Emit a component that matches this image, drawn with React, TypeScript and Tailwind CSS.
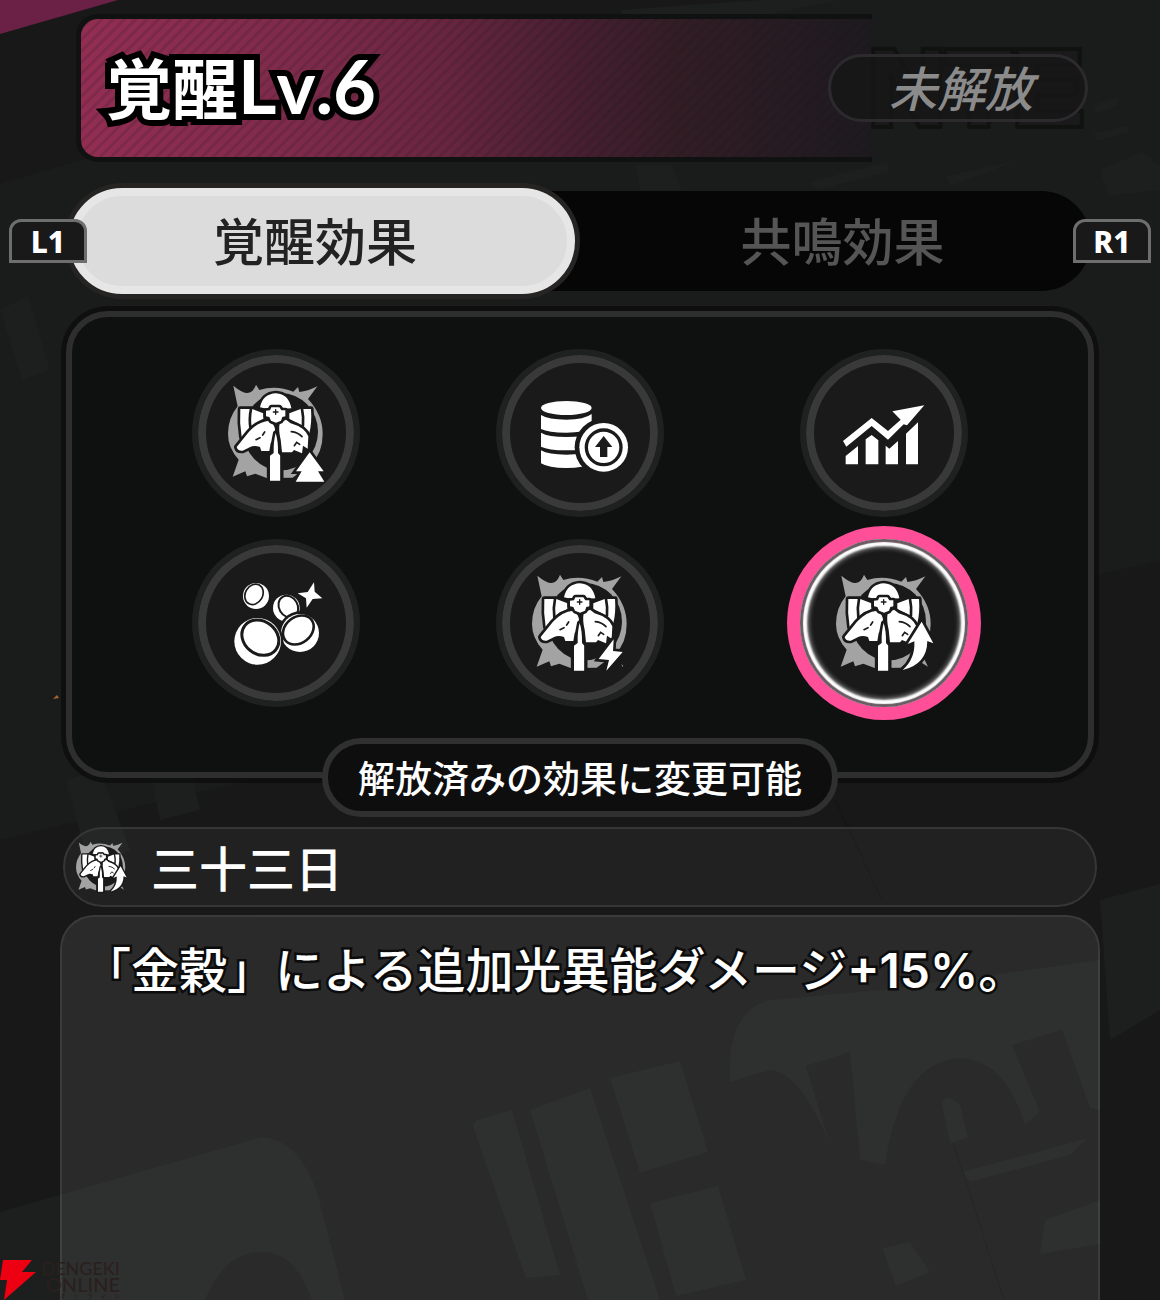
import clsx from "clsx";
import { useState, type ReactNode } from "react";

type Badge = "tree" | "bolt" | "arrow";

const BADGES: Record<Badge, ReactNode> = {
	tree: <path d="M391 338 433 395H416L435 426H349L367 395H350Z" />,
	bolt: <path d="M391 329 389 364 418 367 369 423 377 391 346 388Z" />,
	arrow: <path d="M403 276 438 341 420 334Q419 404 346 421 384 388 381 335L361 343Z" />,
};

const Emblem = ({ badge, className }: { badge: Badge; className: string }) => (
	<svg viewBox="140 130 300 300" className={className} aria-hidden="true">
		<path
			fill="#a3a3a3"
			d="M162 138Q188 160 205 160 222 158 230 135L240 151Q290 136 342 156L356 142 360 157Q385 155 414 140L386 178Q430 225 430 283 430 340 396 372L340 414 262 415 228 402 203 410 198 395 160 411 178 360Q146 325 146 283 146 235 175 200Z"
		/>
		<ellipse cx="304" cy="276" rx="112" ry="116" fill="#1a1a1a" />
		<g fill="#fff" stroke="#1a1a1a" strokeWidth="16" strokeLinejoin="round" className="[paint-order:stroke]">
			<path d="M183 208H214Q207 245 212 272L187 292Q180 250 183 208Z" />
			<path d="M219 208 252 221V238L217 262Q213 235 219 208Z" />
			<path d="M395 208H370Q374 235 372 260L390 280Q398 250 395 208Z" />
			<path d="M364 208 330 221V238L367 256Q369 232 364 208Z" />
			<path d="M242 203Q250 163 290 161 328 163 336 206L312 207 302 197H278L266 208Z" />
			<path d="M172 322 209 276Q236 246 270 243 288 255 287 274 284 300 274 310L270 334H246L242 322Q224 316 211 323L190 333Q174 334 172 322Z" />
			<path d="M301 250 320 240 334 251Q376 263 387 290L385 327 371 318 368 341 344 331 338 338 308 338 304 300Q297 272 301 250Z" />
			<path d="M276 203H300L306 212H318V230L309 232 305 243 290 249 275 243 270 232 260 230V213L272 212Z" />
			<path d="M289 280Q282 305 283 340L272 348V423H303V348L296 340Q297 305 289 280Z" />
		</g>
		<path d="M267 346V426M308 346V426" stroke="#1a1a1a" strokeWidth="9" />
		<g fill="none" stroke="#1a1a1a" strokeWidth="5" strokeLinecap="round">
			<path d="M282 217H296M289 210V224" strokeWidth="4" />
			<path d="M230 300 242 294M250 286 256 277" />
			<path d="M336 276Q356 278 368 291M345 318 352 308 361 314" />
		</g>
		{badge === "arrow" && <path d="M398 396 411 389 422 411Z" fill="#a3a3a3" />}
		{badge === "bolt" && <path d="M414 403 420 409 417 411Z" fill="#a3a3a3" />}
		<g fill="#fff" stroke="#1a1a1a" strokeWidth="16" className="[paint-order:stroke]">
			{BADGES[badge]}
		</g>
	</svg>
);

const CoinStack = () => (
	<svg viewBox="120 126 300 300" className="size-[100px]" fill="#fff" aria-hidden="true">
		<ellipse cx="229" cy="201" rx="76" ry="21" />
		<path d="M153 222Q175 236 229 236 283 236 305 219V262Q283 275 229 275 175 275 153 264Z" />
		<path d="M153 275Q175 288 229 288 283 288 305 275V314Q283 328 229 328 175 328 153 317Z" />
		<path d="M153 328Q175 341 229 341 283 341 305 328V367Q283 381 229 381 175 381 153 367Z" />
		<circle cx="341" cy="319" r="87" fill="#1a1a1a" />
		<circle cx="341" cy="319" r="73" />
		<circle cx="341" cy="319" r="52" fill="none" stroke="#1a1a1a" strokeWidth="10" />
		<path d="M341 285 367 318H352V348H330V318H315Z" fill="#1a1a1a" />
	</svg>
);

const RisingChart = () => (
	<svg viewBox="1032 128 300 300" className="size-[100px]" fill="#fff" aria-hidden="true">
		<path d="M1059 302 1145 233 1194 272 1232 238 1207 213 1303 195 1251 255 1241 252 1194 298 1145 257 1069 319Z" />
		<path d="M1067 347 1104 317V372H1067ZM1127 297 1145 284 1165 300V372H1127ZM1187 316 1198 325 1224 302V372H1187ZM1248 280 1284 246V372H1248Z" />
	</svg>
);

const Pebbles = () => (
	<svg viewBox="138 129 300 300" className="size-[100px]" fill="#fff" aria-hidden="true">
		<circle cx="228" cy="198" r="39" />
		<ellipse cx="222" cy="193" rx="26" ry="32" transform="rotate(30 222 193)" stroke="#1a1a1a" strokeWidth="5" />
		<circle cx="319" cy="234" r="40" />
		<ellipse cx="325" cy="230" rx="28" ry="34" transform="rotate(-30 325 230)" stroke="#1a1a1a" strokeWidth="6" />
		<circle cx="360" cy="309" r="65" fill="#1a1a1a" />
		<circle cx="360" cy="309" r="57" />
		<ellipse cx="355" cy="300" rx="50" ry="39" transform="rotate(-38 355 300)" stroke="#1a1a1a" strokeWidth="8" />
		<circle cx="233" cy="334" r="77" fill="#1a1a1a" />
		<circle cx="233" cy="334" r="70" />
		<ellipse cx="241" cy="323" rx="59" ry="49" transform="rotate(38 241 323)" stroke="#1a1a1a" strokeWidth="9" />
		<path d="M402 157 404 185 427 205 398 207 380 233 378 205 353 190 383 186Z" />
	</svg>
);

const EFFECTS: { id: string; label: string; icon: ReactNode }[] = [
	{ id: "1", label: "覚醒Lv.1", icon: <Emblem badge="tree" className="size-[100px]" /> },
	{ id: "2", label: "覚醒Lv.2", icon: <CoinStack /> },
	{ id: "3", label: "覚醒Lv.3", icon: <RisingChart /> },
	{ id: "4", label: "覚醒Lv.4", icon: <Pebbles /> },
	{ id: "5", label: "覚醒Lv.5", icon: <Emblem badge="bolt" className="size-[100px]" /> },
	{ id: "6", label: "覚醒Lv.6", icon: <Emblem badge="arrow" className="size-[100px]" /> },
];

const Backdrop = () => (
	<svg
		viewBox="0 0 1160 1300"
		preserveAspectRatio="xMidYMin slice"
		className="absolute inset-0 size-full"
		aria-hidden="true"
	>
		<path d="M0 184 560 20 1160-40V560L0 840Z" fill="#1a1c1b" />
		<path d="M0 0H118L0 34Z" fill="#6a2145" />
		<g fill="#1c1f1e">
			<path d="M620 10 760 0H840L640 40Z" />
			<path d="M1100 170 1142 152 1160 166V190L1108 196Z" />
			<path d="M1094 105 1118 97V106L1096 113ZM1094 133 1128 125V133L1096 141Z" />
			<path d="M636 165H672L682 190H640ZM808 182 888 162V172L818 190ZM946 176 1020 160 950 186Z" />
			<path d="M0 1212 262 1137Q300 1140 318 1195L345 1300H312Q295 1252 262 1252 225 1252 205 1300H0Z" />
			<path d="M474 1130Q470 1120 484 1118L512 1110 560 1275 526 1278ZM530 1110 590 1088 660 1300H588Z" />
			<path d="M610 1078 680 1061 708 1152 640 1173ZM650 1203 718 1186 746 1280 676 1296Z" />
			<path d="M730 1082Q726 1010 770 1000L880 990 1100 960V1110L1090 1108 1062 1030 1012 1045 1040 1112 1025 1125Q1005 1060 960 1058 900 1062 885 1165L860 1160 850 1052 806 1066 830 1145Q800 1072 770 1070Z" />
			<path d="M942 1105Q945 1090 960 1105L968 1138 950 1143ZM962 1172 1088 1138 1070 1155 970 1182ZM1045 1220 1100 1200V1244L1040 1254ZM882 1248 910 1242 930 1272 896 1286Z" />
			<path d="M0 310 28 296 50 370 22 380ZM66 780 100 770 130 850 90 870ZM150 770 190 765 200 810 160 820Z" />
			<path d="M1100 900 1160 884V1010L1110 1040Z" />
		</g>
		<path d="M835 800 882 900M954 1145 1004 1300" stroke="#141414" />
		<path d="M53 699 57 695 59 698Z" fill="#a8652f" />
	</svg>
);

const TABS = ["覚醒効果", "共鳴効果"];

const keyCap =
	"relative z-10 flex h-[44px] w-[78px] shrink-0 items-center justify-center rounded-t-[12px] border-[3px] border-[#6e6e6e] bg-[#191919] pt-[2px] font-['Noto_Sans','Noto_Sans_CJK_JP',sans-serif] text-[30px] leading-none font-extrabold text-white";

export default function App() {
	const [tab, setTab] = useState(0);
	const [selected, setSelected] = useState("6");

	return (
		<main
			lang="ja"
			className="relative flex min-h-screen flex-col overflow-hidden bg-[#181818] font-['Noto_Sans_CJK_JP',sans-serif] font-medium text-white"
		>
			<Backdrop />

			<header className="relative mx-[72px] mt-[14px] flex h-[148px] items-center justify-between pl-[34px]">
				<div className="absolute inset-y-0 right-[216px] left-[4px] rounded-l-[22px] border-[5px] border-r-0 border-[#101111] bg-[repeating-linear-gradient(135deg,transparent_0_4px,rgba(20,20,30,0.15)_5px_7px,transparent_8px),linear-gradient(90deg,#932e52_0%,#7c2a49_30%,#6a263f_45%,#471f30_63%,#331d25_75%,#1d1a1e_100%)] bg-origin-border" />
				<span
					aria-hidden="true"
					className="absolute right-[4px] font-['Liberation_Sans_Narrow','Liberation_Sans',sans-serif] text-[108px] leading-none font-bold text-[#1a191c] [-webkit-text-stroke:8px_#101210] [paint-order:stroke_fill]"
				>
					NTE
				</span>
				<h1 className="relative pb-[4px] text-[66px] leading-none font-bold [-webkit-text-stroke:12px_#000] [paint-order:stroke_fill]">
					覚醒
					<span className="font-['Lato',sans-serif] text-[74px] leading-none [font-kerning:none]">Lv.6</span>
				</h1>
				<p className="relative flex h-[68px] w-[260px] items-center justify-center rounded-full border-[3px] border-[#2c2a2d] bg-[#161617]/80 pb-[4px] pl-[6px] text-[48px] leading-none text-[#8b8b8b] italic">
					未解放
				</p>
			</header>

			<nav className="relative mt-[29px] flex items-center px-[9px]">
				<button type="button" onClick={() => setTab(0)} className={keyCap}>
					L1
				</button>
				<div role="tablist" className="-mx-[18px] grid h-[100px] flex-1 grid-cols-2 rounded-full bg-[#060606]">
					{TABS.map((name, i) => (
						<button
							key={name}
							type="button"
							role="tab"
							aria-selected={tab === i}
							onClick={() => setTab(i)}
							className={clsx(
								"rounded-full pb-[4px] text-[51px] leading-none",
								i === 0 ? "pr-[14px]" : "pl-[14px]",
								tab === i
									? "-my-[3px] mr-[5px] border-[8px] border-[#e6e6e6] bg-[#dcdcdc] text-[#222] shadow-[0_0_0_5px_#262323]"
									: "text-[#555]",
							)}
						>
							{name}
						</button>
					))}
				</div>
				<button type="button" onClick={() => setTab(1)} className={keyCap}>
					R1
				</button>
			</nav>

			<section className="relative mx-[66px] mt-[20px] rounded-[42px] border-[6px] border-[#2e2e2e] bg-[#0e110f] px-[52px] pt-[32px] pb-[65px] shadow-[0_0_0_5px_rgba(12,12,12,0.8)]">
				<div className="grid grid-cols-3 justify-items-center gap-y-[22px]">
					{EFFECTS.map((e) => (
						<button
							key={e.id}
							type="button"
							aria-label={e.label}
							aria-pressed={selected === e.id}
							onClick={() => setSelected(e.id)}
							className={clsx(
								"flex size-[168px] items-center justify-center rounded-full bg-[#1a1a1a]",
								selected === e.id
									? "shadow-[inset_0_0_1px_3px_#6a5a62,inset_0_0_2px_7px_#fff,inset_0_0_4px_9px_#777,0_0_0_13px_#ff4f98]"
									: "border-[6px] border-[#1f2020] shadow-[inset_0_0_0_8px_#393939]",
							)}
						>
							{e.icon}
						</button>
					))}
				</div>
			</section>

			<p className="relative -mt-[40px] flex h-[79px] items-center self-center rounded-full border-[6px] border-[#303030] bg-[#0e0e0e] px-[30px] text-[37px] leading-none">
				解放済みの効果に変更可能
			</p>

			<div className="relative mx-[63px] mt-[10px] flex h-[80px] items-center gap-[24px] rounded-full border-2 border-[#363636] bg-white/4 px-[10px]">
				<Emblem badge="arrow" className="size-[52px]" />
				<h2 className="pb-[2px] text-[48px] leading-none">三十三日</h2>
			</div>

			<section className="relative mx-[60px] mt-[8px] flex-1 rounded-t-[34px] border-2 border-b-0 border-white/8 bg-white/8 px-[21px] pt-[16px]">
				<p className="text-[48px] leading-[68px] [-webkit-text-stroke:5px_#0c0c0c] [paint-order:stroke_fill]">
					「金穀」による追加光異能ダメージ
					<span className="font-['Inter',sans-serif] font-semibold">+15%</span>。
				</p>
			</section>

			<footer className="absolute bottom-0 left-0 flex h-[40px] items-start gap-[4px]">
				<svg viewBox="0 0 36 40" className="h-[40px] w-[36px]" aria-hidden="true">
					<path d="M3 0H32L22 12H36L4 40 7 20H0Z" fill="#ec0012" />
				</svg>
				<div className="w-[80px] text-right font-['Lato','Noto_Sans_CJK_JP',sans-serif] text-[#2b1f1e]">
					<p className="text-[18px] leading-[16px]">DENGEKI</p>
					<p className="text-[20px] leading-[16px]">ONLINE</p>
					<p className="flex justify-between pl-[20px] text-[6px] leading-[8px]">
						{[..."オンライン"].map((c, i) => (
							<span key={i}>{c}</span>
						))}
					</p>
				</div>
			</footer>
		</main>
	);
}
